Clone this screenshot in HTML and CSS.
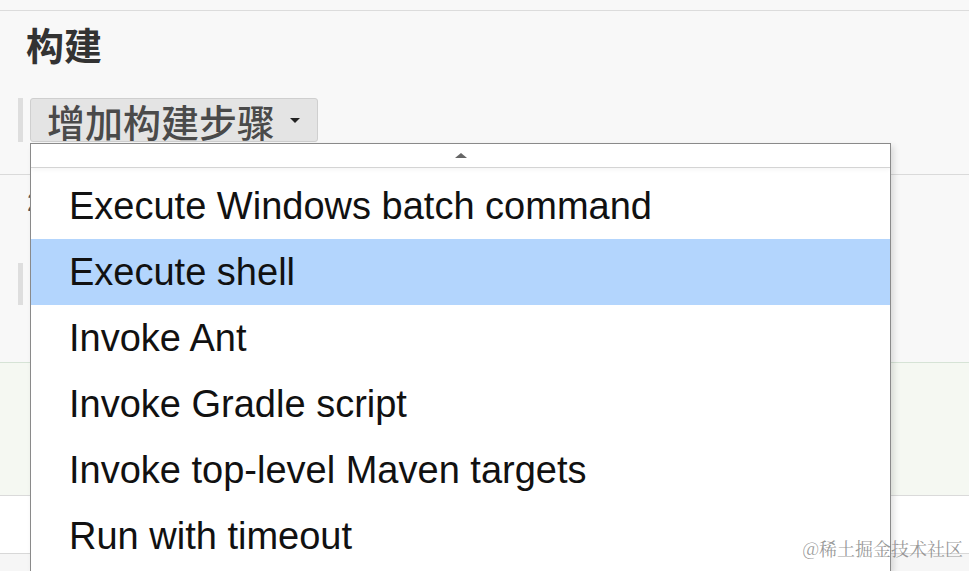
FILE: index.html
```html
<!DOCTYPE html>
<html lang="zh">
<head>
<meta charset="utf-8">
<link rel="stylesheet" href="styles.css">
</head>
<body>
<div class="page">
  <section class="build">
    <h2 class="title">构建</h2>
    <div class="btn-row">
      <span class="grip"></span>
      <button class="add-btn">增加构建步骤<span class="caret"></span></button>
    </div>
  </section>
  <section class="row row-post">
    <div class="hidden-label">2</div>
    <div class="btn-row second">
      <span class="grip"></span>
    </div>
  </section>
  <section class="row row-green"></section>
  <section class="row row-white"></section>
  <section class="row row-last"></section>

  <div class="menu">
    <div class="menu-scroll"><span class="up"></span></div>
    <ul class="menu-list">
      <li class="item">Execute Windows batch command</li>
      <li class="item active">Execute shell</li>
      <li class="item">Invoke Ant</li>
      <li class="item">Invoke Gradle script</li>
      <li class="item">Invoke top-level Maven targets</li>
      <li class="item">Run with timeout</li>
    </ul>
  </div>
  <div class="watermark">@稀土掘金技术社区</div>
</div>
</body>
</html>
```
FILE: styles.css
```css
html, body {
  margin: 0;
  padding: 0;
}
body {
  background: #f8f8f8;
  font-family: "Liberation Sans", "Noto Sans CJK SC", sans-serif;
  width: 969px;
  height: 571px;
  overflow: hidden;
}
.page {
  position: relative;
  padding-top: 10px;
  height: 561px;
}
.build {
  border-top: 1px solid #dcdcdc;
  height: 164px;
  box-sizing: border-box;
}
.title {
  margin: 0;
  padding: 12px 0 0 26px;
  font-family: "Noto Sans CJK SC", sans-serif;
  font-weight: 700;
  font-size: 38px;
  line-height: 42px;
  color: #333;
}
.btn-row {
  display: flex;
  align-items: stretch;
  margin-top: 33px;
  padding-left: 18px;
  height: 44px;
}
.grip {
  width: 5px;
  background: #dedede;
  margin-right: 7px;
}
.add-btn {
  display: flex;
  align-items: center;
  gap: 15px;
  width: 288px;
  height: 44px;
  box-sizing: border-box;
  padding: 0 0 0 16px;
  background: #e4e4e4;
  border: 1px solid #cfcfcf;
  border-radius: 3px;
  font-family: "Noto Sans CJK SC", sans-serif;
  font-weight: 500;
  font-size: 38px;
  color: #4a4a4a;
}
.caret {
  width: 0;
  height: 0;
  border-left: 5px solid transparent;
  border-right: 5px solid transparent;
  border-top: 5px solid #222;
}
.row {
  box-sizing: border-box;
}
.row-post {
  border-top: 1px solid #dadada;
  height: 188px;
}
.hidden-label {
  padding: 12px 0 0 27px;
  font-size: 26px;
  color: #555;
  height: 50px;
}
.second {
  margin-top: 26px;
}
.second .grip {
  height: 42px;
}
.row-green {
  border-top: 1px solid #d6e3d6;
  background: #f5f8f2;
  height: 133px;
}
.row-white {
  border-top: 1px solid #dadada;
  background: #ffffff;
  height: 58px;
}
.row-last {
  border-top: 1px solid #d8d8d8;
  background: #f6f6f6;
  height: 40px;
}
.menu {
  position: absolute;
  left: 30px;
  top: 143px;
  width: 861px;
  height: 428px;
  background: #fff;
  border: 1px solid #8a8a8a;
  border-bottom: none;
  box-sizing: border-box;
  box-shadow: 3px 3px 6px rgba(0,0,0,0.12);
  overflow: hidden;
}
.menu-scroll {
  height: 23px;
  border-bottom: 1px solid #d4d4d4;
  display: flex;
  justify-content: center;
  align-items: center;
  box-shadow: 0 2px 4px rgba(0,0,0,0.04);
}
.up {
  width: 0;
  height: 0;
  border-left: 6px solid transparent;
  border-right: 6px solid transparent;
  border-bottom: 5px solid #666;
}
.menu-list {
  list-style: none;
  margin: 0;
  padding: 5px 0 0;
}
.item {
  height: 66px;
  line-height: 66px;
  padding-left: 38px;
  font-size: 38px;
  color: #111;
  white-space: nowrap;
}
.item.active {
  background: #b3d5fd;
}
.watermark {
  position: absolute;
  right: 6px;
  bottom: 10px;
  font-family: "Noto Serif CJK SC", "Noto Sans CJK SC", serif;
  font-size: 18px;
  color: rgba(120,120,120,0.75);
}
```
